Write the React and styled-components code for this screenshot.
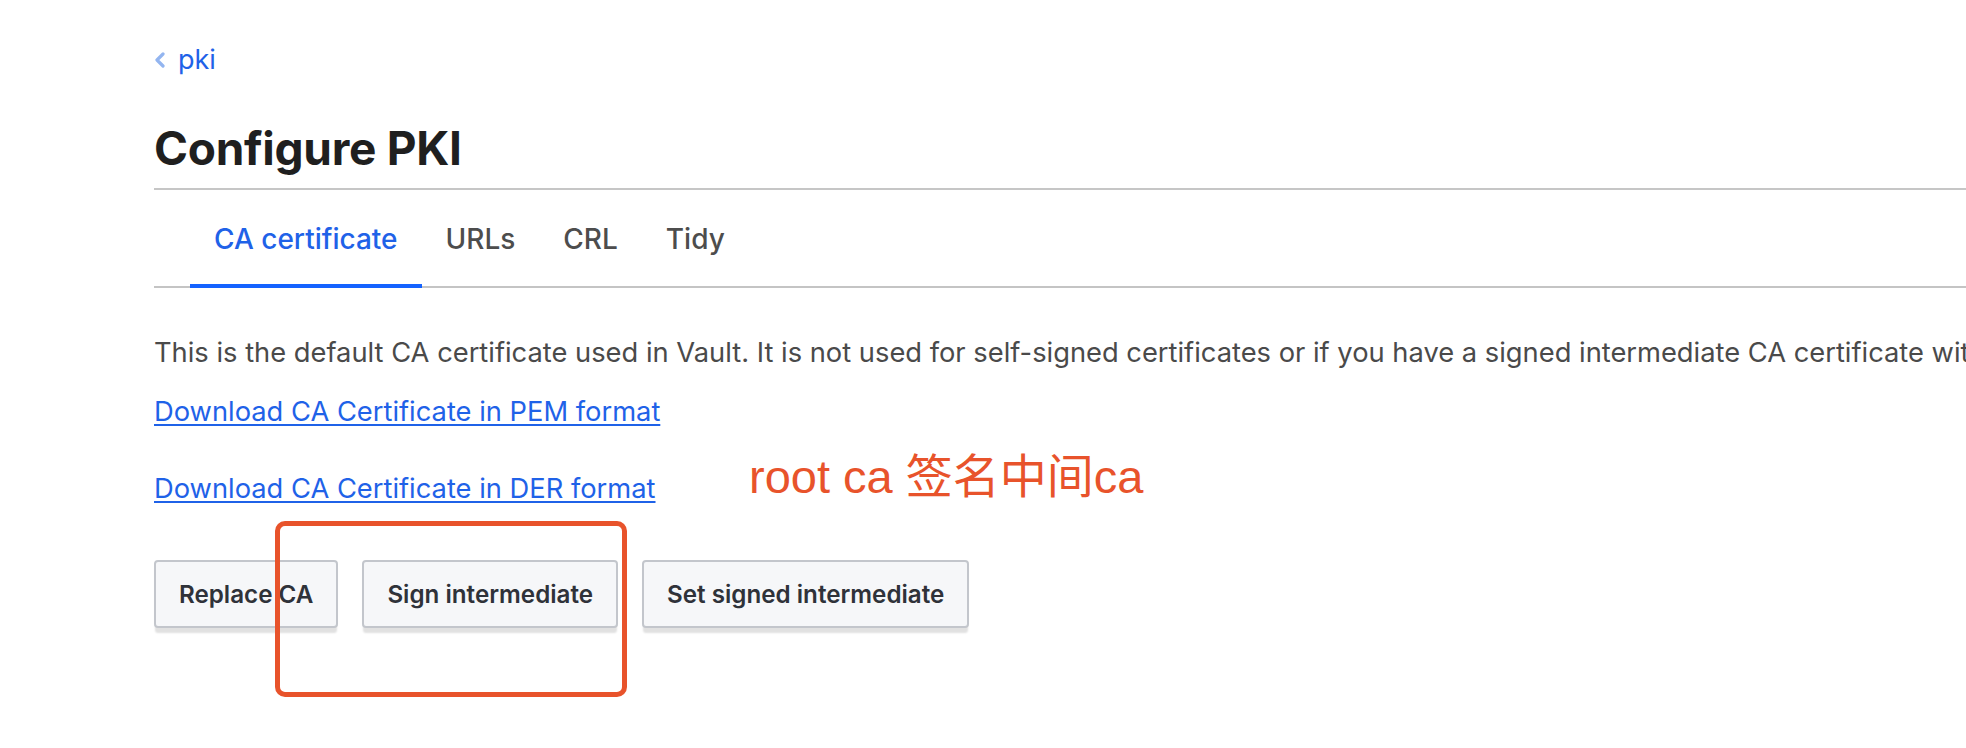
import React from "react";
import styled, { createGlobalStyle } from "styled-components";

const Global = createGlobalStyle`
  html, body { margin: 0; padding: 0; background: #ffffff; overflow: hidden; }
  body { font-family: Inter, "Noto Sans", sans-serif; color: #4a4a4a; }
`;

const Page = styled.div`
  position: relative;
  width: 1966px;
  height: 748px;
  padding-left: 154px;
  box-sizing: border-box;
  overflow: hidden;
`;

const Breadcrumb = styled.div`
  display: flex;
  align-items: center;
  gap: 12px;
  padding-top: 44px;
  height: 32px;
`;

const CrumbLink = styled.a`
  font-size: 27px;
  line-height: 32px;
  color: #1f62e8;
  text-decoration: none;
`;

const Title = styled.h1`
  margin: 42px 0 0 0;
  font-size: 46px;
  font-weight: 700;
  line-height: 60px;
  color: #1f1f1f;
  letter-spacing: -0.3px;
  padding-bottom: 10px;
  border-bottom: 2px solid #c6c6c6;
`;

const Tabs = styled.nav`
  display: flex;
  padding-left: 36px;
  height: 98px;
  box-shadow: inset 0 -2px 0 #c4c4c4;
`;

const Tab = styled.a`
  display: flex;
  align-items: center;
  padding: 0 24px;
  font-size: 28px;
  font-weight: 500;
  color: ${(p) => (p.$active ? "#1f62e8" : "#4d4d4d")};
  box-shadow: ${(p) => (p.$active ? "inset 0 -4px 0 #1563ff" : "none")};
  text-decoration: none;
`;

const Description = styled.p`
  margin: 44px 0 0 0;
  font-size: 27.3px;
  line-height: 42px;
  white-space: nowrap;
  color: #4a4a4a;
`;

const DownloadLink = styled.a`
  display: block;
  margin-top: ${(p) => p.$gap}px;
  font-size: 27.3px;
  line-height: 42px;
  color: #1f62e8;
  text-decoration: underline;
  text-underline-offset: 3px;
  width: max-content;
`;

const Actions = styled.div`
  display: flex;
  gap: 24px;
  margin-top: 50px;
`;

const Button = styled.button`
  height: 68px;
  padding: 0 23px;
  font-family: Inter, sans-serif;
  font-size: 24.2px;
  font-weight: 600;
  color: #2f3239;
  background: #f6f7f9;
  border: 2px solid #c3c6cc;
  border-radius: 4px;
  box-shadow: 0 6px 2px -1px rgba(10, 10, 10, 0.12);
`;

const Highlight = styled.div`
  position: absolute;
  left: 275px;
  top: 521px;
  width: 352px;
  height: 176px;
  box-sizing: border-box;
  border: 5px solid #e8532b;
  border-radius: 10px;
`;

const Note = styled.div`
  position: absolute;
  left: 749px;
  top: 452px;
  font-family: "Liberation Sans", "Noto Sans CJK SC", sans-serif;
  font-size: 47px;
  line-height: 50px;
  color: #e8532b;
  white-space: nowrap;
`;

function Chevron() {
  return (
    <svg width="12" height="16" viewBox="0 0 12 16" aria-hidden="true">
      <polyline
        points="9,2 3,8 9,14"
        fill="none"
        stroke="#93b5f0"
        strokeWidth="3.2"
        strokeLinecap="round"
        strokeLinejoin="round"
      />
    </svg>
  );
}

export default function App() {
  return (
    <>
      <Global />
      <Page>
        <Breadcrumb>
          <Chevron />
          <CrumbLink href="#">pki</CrumbLink>
        </Breadcrumb>
        <Title>Configure PKI</Title>
        <Tabs>
          <Tab $active href="#">CA certificate</Tab>
          <Tab href="#">URLs</Tab>
          <Tab href="#">CRL</Tab>
          <Tab href="#">Tidy</Tab>
        </Tabs>
        <Description>
          This is the default CA certificate used in Vault. It is not used for
          self-signed certificates or if you have a signed intermediate CA
          certificate with a generated key.
        </Description>
        <DownloadLink href="#" $gap={17}>
          Download CA Certificate in PEM format
        </DownloadLink>
        <DownloadLink href="#" $gap={35}>
          Download CA Certificate in DER format
        </DownloadLink>
        <Actions>
          <Button>Replace CA</Button>
          <Button>Sign intermediate</Button>
          <Button>Set signed intermediate</Button>
        </Actions>
        <Highlight />
        <Note>root ca 签名中间ca</Note>
      </Page>
    </>
  );
}
